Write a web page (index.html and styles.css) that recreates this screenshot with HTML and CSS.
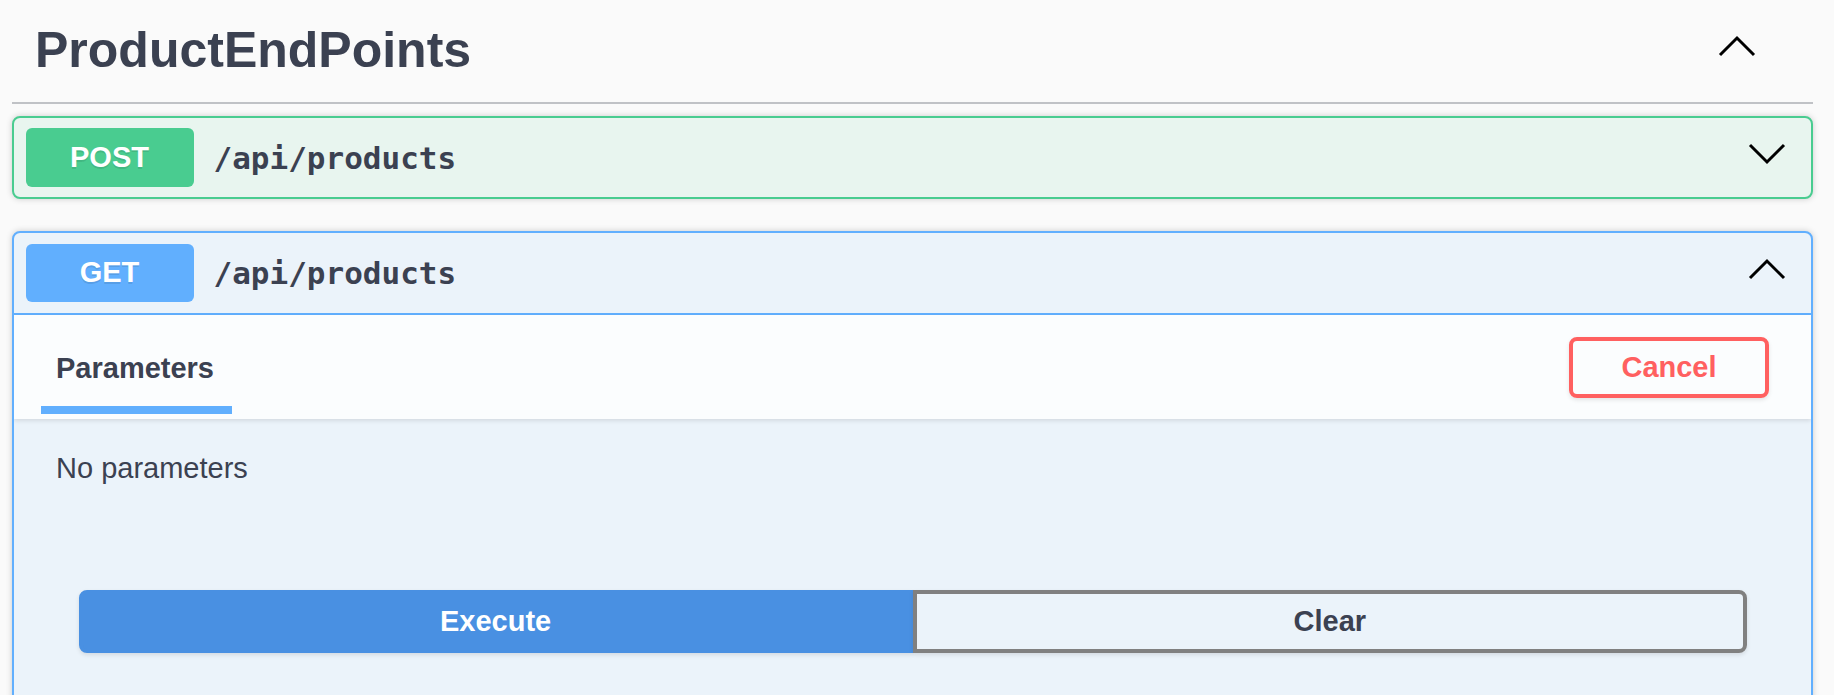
FILE: index.html
```html
<!DOCTYPE html>
<html lang="en">
<head>
<meta charset="utf-8">
<title>ProductEndPoints</title>
<link rel="stylesheet" href="styles.css">
</head>
<body>
<div class="wrapper">
  <div class="tag">
    <h3 class="tag-title">ProductEndPoints</h3>
    <button class="arrow-btn tag-arrow" aria-label="Collapse">
      <svg width="40" height="40" viewBox="0 0 40 40"><polyline points="3,25 20,8 37,25" fill="none" stroke="#000" stroke-width="3"/></svg>
    </button>
  </div>

  <div class="opblock opblock-post">
    <div class="summary">
      <span class="method">POST</span>
      <span class="path">/api/products</span>
      <button class="arrow-btn" aria-label="Expand">
        <svg width="40" height="40" viewBox="0 0 40 40"><polyline points="3,7 20,24 37,7" fill="none" stroke="#000" stroke-width="3"/></svg>
      </button>
    </div>
  </div>

  <div class="opblock opblock-get">
    <div class="summary">
      <span class="method">GET</span>
      <span class="path">/api/products</span>
      <button class="arrow-btn" aria-label="Collapse">
        <svg width="40" height="40" viewBox="0 0 40 40"><polyline points="3,25 20,8 37,25" fill="none" stroke="#000" stroke-width="3"/></svg>
      </button>
    </div>
    <div class="section-header">
      <h4 class="tab-item">Parameters</h4>
      <button class="btn cancel">Cancel</button>
    </div>
    <div class="description">
      <p class="no-params">No parameters</p>
    </div>
    <div class="btn-group">
      <button class="btn execute">Execute</button>
      <button class="btn clear">Clear</button>
    </div>
    <div class="responses"></div>
  </div>
</div>
</body>
</html>
```

FILE: styles.css
```css
html, body {
  margin: 0;
  padding: 0;
  height: 695px;
  overflow: hidden;
  background: #fafafa;
}
body {
  font-family: "Liberation Sans", Arial, sans-serif;
  color: #3b4151;
}
.wrapper {
  padding: 0 21px 0 12px;
}
.tag {
  display: flex;
  align-items: center;
  padding: 21px 0 23px 23px;
  border-bottom: 2px solid rgba(59, 65, 81, 0.3);
  margin-bottom: 12px;
}
.tag-title {
  flex: 1;
  margin: 0;
  font-size: 50px;
  line-height: 58px;
  font-weight: bold;
  color: #3b4151;
}
.arrow-btn {
  border: none;
  background: none;
  padding: 0;
  margin: 0;
  display: flex;
  cursor: pointer;
}
.tag-arrow {
  margin-right: 56px;
}
.opblock {
  border: 2px solid #000;
  border-radius: 8px;
  box-shadow: 0 0 6px rgba(0, 0, 0, 0.19);
  margin-bottom: 32px;
  overflow: hidden;
}
.opblock-post {
  background: #e8f5ef;
  border-color: #49cc90;
}
.opblock-get {
  background: #ebf3fa;
  border-color: #61affe;
}
.summary {
  display: flex;
  align-items: center;
  padding: 10.4px 12px 10.4px 11.5px;
}
.opblock-get .summary {
  border-bottom: 2px solid #61affe;
}
.summary .arrow-btn {
  margin-right: 12px;
}
.method {
  min-width: 168px;
  padding: 12.5px 0;
  line-height: 33.5px;
  font-size: 29px;
  font-weight: bold;
  color: #fff;
  text-align: center;
  border-radius: 6px;
  text-shadow: 0 2px 0 rgba(0, 0, 0, 0.1);
}
.opblock-post .method { background: #49cc90; }
.opblock-get .method { background: #61affe; }
.path {
  flex: 1;
  padding-left: 20px;
  font-family: "DejaVu Sans Mono", monospace;
  font-size: 31px;
  font-weight: bold;
  color: #3b4151;
}
.section-header {
  display: flex;
  align-items: center;
  justify-content: space-between;
  height: 104px;
  box-sizing: border-box;
  padding: 3px 42px 0;
  background: rgba(255, 255, 255, 0.8);
  box-shadow: 0 2px 4px rgba(0, 0, 0, 0.1);
}
.tab-item {
  position: relative;
  margin: 0;
  font-size: 29px;
  line-height: 29px;
  font-weight: bold;
  color: #3b4151;
}
.tab-item::after {
  content: "";
  position: absolute;
  left: -15px;
  right: -18px;
  top: 52px;
  height: 8.5px;
  background: #61affe;
}
.btn {
  font-family: "Liberation Sans", Arial, sans-serif;
  font-size: 29px;
  font-weight: bold;
  line-height: 33px;
  padding: 10px 46px;
  border: 4px solid #808080;
  border-radius: 8px;
  background: transparent;
  color: #3b4151;
  box-shadow: 0 2px 4px rgba(0, 0, 0, 0.1);
}
.cancel {
  border-color: #ff6060;
  color: #ff6060;
  width: 200px;
  padding: 10px 0;
  margin-top: -1px;
}
.description {
  padding: 33px 42px 43px;
}
.no-params {
  margin: 0;
  font-size: 29px;
  line-height: 33px;
  color: #3b4151;
}
.btn-group {
  display: flex;
  padding: 62px 64px 62px 64.5px;
}
.btn-group .btn {
  flex: 1;
  line-height: 35px;
}
.execute {
  background: #4990e2;
  border-color: #4990e2;
  color: #fff;
  border-radius: 8px 0 0 8px;
}
.clear {
  border-radius: 0 8px 8px 0;
}
.responses {
  height: 200px;
}
```
